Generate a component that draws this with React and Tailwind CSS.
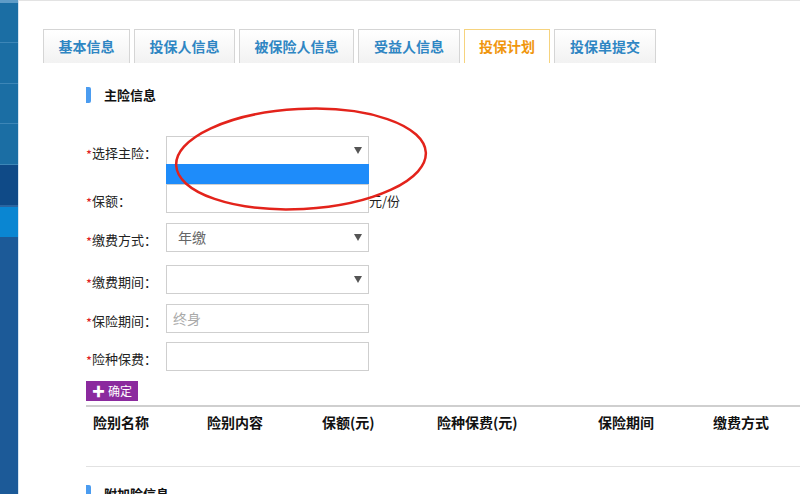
import React from 'react';

const font = { fontFamily: '"Noto Sans CJK SC", "Noto Sans", sans-serif' };

const tabs = [
  { name: '基本信息', w: 'w-[87px]' },
  { name: '投保人信息', w: 'w-[101px]' },
  { name: '被保险人信息', w: 'w-[115px]' },
  { name: '受益人信息', w: 'w-[102px]' },
  { name: '投保计划', w: 'w-[86px]', active: true },
  { name: '投保单提交', w: 'w-[102px]' },
];

const columns = [
  { name: '险别名称', w: 'w-[114px]' },
  { name: '险别内容', w: 'w-[115px]' },
  { name: '保额(元)', w: 'w-[115px]' },
  { name: '险种保费(元)', w: 'w-[161px]' },
  { name: '保险期间', w: 'w-[115px]' },
  { name: '缴费方式', w: 'w-[90px]' },
];

function Label({ text }) {
  return (
    <div className="w-[80px] pt-[7px] text-[13px] text-[#222] whitespace-nowrap">
      <span className="relative top-[2px] text-[#e0201f] text-[13px]">*</span>{text}：
    </div>
  );
}

function Arrow() {
  return (
    <span className="absolute right-[6px] top-[10px] w-0 h-0 border-l-[4px] border-r-[4px] border-t-[7px] border-l-transparent border-r-transparent border-t-[#555]"></span>
  );
}

function Box({ children, open }) {
  return (
    <div className="relative w-[203px] h-[29px] border border-[#cfcfcf] bg-white">
      {children}
      {open && (
        <div className="absolute left-[-1px] top-[27px] w-[203px] h-[20px] bg-[#1e8cfa] z-10"></div>
      )}
    </div>
  );
}

function SectionTitle({ text }) {
  return (
    <div className="flex items-center gap-[13px]">
      <div className="w-[5px] h-[16px] bg-[#4b9cf0] rounded-r-[2px]"></div>
      <div className="text-[13px] font-bold text-[#111]">{text}</div>
    </div>
  );
}

export default function App() {
  return (
    <div className="relative flex w-[800px] h-[494px] overflow-hidden bg-white" style={font}>
      <div className="w-[18px] flex flex-col shrink-0">
        <div className="h-[3px] bg-[#5f9cc7]"></div>
        <div className="h-[40px] bg-[#1b6ea4] border-b border-[#3d86b7]"></div>
        <div className="h-[41px] bg-[#1b6ea4] border-b border-[#3d86b7]"></div>
        <div className="h-[40px] bg-[#1b6ea4] border-b border-[#3d86b7]"></div>
        <div className="h-[41px] bg-[#1b6ea4] border-b border-[#3d86b7]"></div>
        <div className="h-[42px] bg-[#0f4a87] border-b-[2px] border-[#2a65a0]"></div>
        <div className="h-[30px] bg-[#0a86d2]"></div>
        <div className="flex-1 bg-[#1c5a98]"></div>
      </div>
      <div className="w-px bg-[#d6e4f0] shrink-0"></div>

      <div className="flex-1 flex flex-col">
        <div className="h-[3px] border-b border-[#e3e3e3]"></div>

        <div className="flex gap-[4px] ml-[24px] mt-[28px]">
          {tabs.map(t => (
            <div
              key={t.name}
              className={`${t.w} h-[34px] flex items-center justify-center border border-b-0 text-[14px] font-bold ${t.active ? 'border-[#f6d37e] bg-white text-[#f0960f]' : 'border-[#d5d5d5] bg-gradient-to-b from-white to-[#f2f2f2] text-[#2f86c3]'}`}
            >
              {t.name}
            </div>
          ))}
        </div>

        <div className="ml-[67px] mt-[22px]">
          <SectionTitle text="主险信息" />
        </div>

        <div className="ml-[67px] mt-[31px] flex flex-col">
          <div className="flex">
            <Label text="选择主险" />
            <div className="relative z-10">
              <Box open>
                <Arrow />
              </Box>
            </div>
          </div>

          <div className="flex mt-[19px] items-start">
            <Label text="保额" />
            <div className="w-[203px] h-[29px] border border-[#cfcfcf] bg-white"></div>
            <div className="pt-[7px] text-[13px] text-[#222]">元/份</div>
          </div>

          <div className="flex mt-[10px]">
            <Label text="缴费方式" />
            <Box>
              <span className="absolute left-[11px] top-[3px] text-[14px] text-[#666]">年缴</span>
              <Arrow />
            </Box>
          </div>

          <div className="flex mt-[13px]">
            <Label text="缴费期间" />
            <Box>
              <Arrow />
            </Box>
          </div>

          <div className="flex mt-[10px]">
            <Label text="保险期间" />
            <Box>
              <span className="absolute left-[6px] top-[3px] text-[14px] text-[#aaa]">终身</span>
            </Box>
          </div>

          <div className="flex mt-[9px]">
            <Label text="险种保费" />
            <Box />
          </div>

          <div className="mt-[10px]">
            <button className="h-[20px] px-[6px] bg-[#8b2a9e] text-white text-[12px] flex items-center gap-[3px]">
              <span className="text-[13px] font-bold leading-none">✚</span>确定
            </button>
          </div>

          <div className="mt-[4px] border-t-[2px] border-[#cfcfcf] h-[62px] border-b border-b-[#e2e2e2] flex pl-[7px] pt-[5px]">
            {columns.map(c => (
              <div key={c.name} className={`${c.w} shrink-0 text-[14px] font-bold text-[#111]`}>{c.name}</div>
            ))}
          </div>

          <div className="mt-[17px]">
            <SectionTitle text="附加险信息" />
          </div>
        </div>
      </div>

      <svg className="absolute left-[172px] top-[104px] z-20" width="258" height="110" viewBox="0 0 258 110">
        <ellipse cx="129" cy="55" rx="125" ry="50" fill="none" stroke="#e3231b" strokeWidth="2.5" transform="rotate(-3 129 55)" />
      </svg>
    </div>
  );
}
